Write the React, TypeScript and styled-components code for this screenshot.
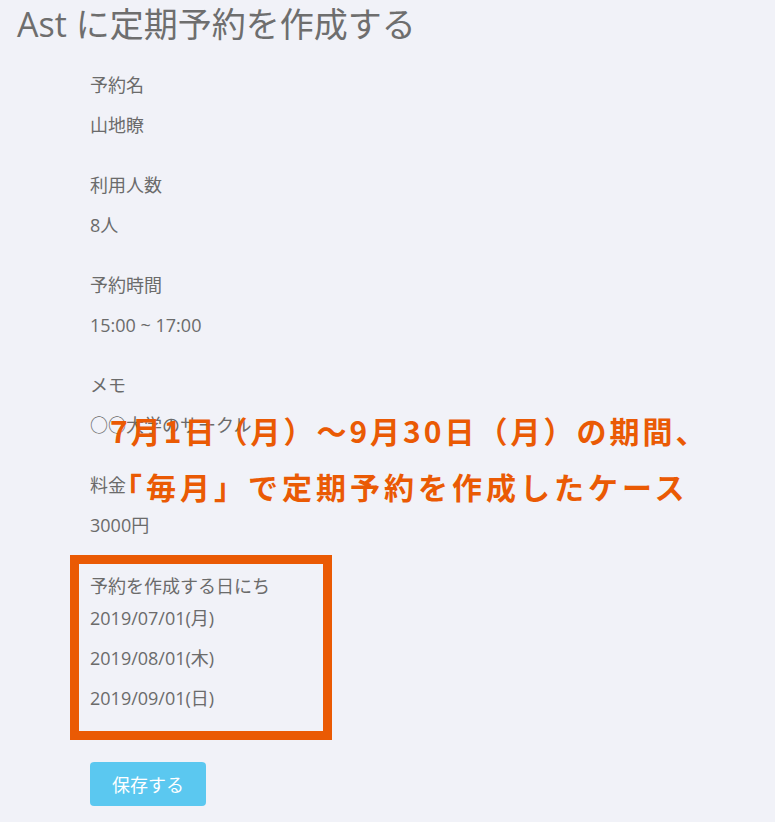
import React from 'react'
import styled, { createGlobalStyle } from 'styled-components'

const GlobalStyle = createGlobalStyle`
  body {
    margin: 0;
    background: #f1f2f8;
    font-family: "Open Sans", "Noto Sans CJK JP", sans-serif;
    color: #6b6b6b;
  }
`

const Page = styled.div`
  position: relative;
  width: 775px;
  height: 822px;
  overflow: hidden;
`

const Title = styled.h1`
  margin: 3px 0 0 17px;
  font-size: 34px;
  font-weight: 400;
  line-height: 42px;
  color: #6e6e6e;
`

const Form = styled.div`
  display: flex;
  flex-direction: column;
  padding: 28px 0 0 90px;
`

const Field = styled.div<{ $gap?: number }>`
  display: flex;
  flex-direction: column;
  gap: 16px;
  margin-bottom: ${(p) => p.$gap ?? 36}px;
`

const Label = styled.div`
  font-size: 18px;
  line-height: 24px;
`

const Value = styled.div`
  font-size: 18px;
  line-height: 24px;
`

const Highlight = styled.div`
  display: flex;
  flex-direction: column;
  gap: 16px;
  width: 233px;
  margin-left: -20px;
  padding: 10px 0 21px 11px;
  border: 9px solid #ea5a04;
`

const Dates = styled.div`
  display: flex;
  flex-direction: column;
  gap: 16px;
  margin-top: -8px;
`

const SaveButton = styled.button`
  align-self: flex-start;
  margin-top: 22px;
  width: 116px;
  height: 44px;
  border: none;
  border-radius: 4px;
  background: #5bc8f0;
  color: #fff;
  font-family: "Open Sans", "Noto Sans CJK JP", sans-serif;
  font-size: 18px;
  cursor: pointer;
`

const Annotation = styled.div`
  position: absolute;
  left: 110px;
  top: 410px;
  display: flex;
  flex-direction: column;
  gap: 15px;
  font-family: "Noto Sans CJK JP", sans-serif;
  font-weight: 700;
  font-size: 30px;
  line-height: 41px;
  color: #ea5a04;
  white-space: nowrap;
`

const AnnotationLine = styled.div<{ $spacing?: number; $indent?: number }>`
  padding-left: ${(p) => p.$indent ?? 0}px;
  letter-spacing: ${(p) => p.$spacing ?? 3}px;
`

const fields = [
  { label: '予約名', value: '山地瞭' },
  { label: '利用人数', value: '8人' },
  { label: '予約時間', value: '15:00 ~ 17:00' },
  { label: 'メモ', value: '○○大学のサークル' },
  { label: '料金', value: '3000円' },
]

const dates = ['2019/07/01(月)', '2019/08/01(木)', '2019/09/01(日)']

export default function App() {
  return (
    <>
      <GlobalStyle />
      <Page>
        <Title>Ast に定期予約を作成する</Title>
        <Form>
          {fields.map((f, i) => (
            <Field key={f.label} $gap={i === fields.length - 1 ? 18 : 36}>
              <Label>{f.label}</Label>
              <Value>{f.value}</Value>
            </Field>
          ))}
          <Highlight>
            <Label>予約を作成する日にち</Label>
            <Dates>
              {dates.map((d) => (
                <Value key={d}>{d}</Value>
              ))}
            </Dates>
          </Highlight>
          <SaveButton>保存する</SaveButton>
        </Form>
        <Annotation>
          <AnnotationLine>7月1日（月）～9月30日（月）の期間、</AnnotationLine>
          <AnnotationLine $indent={2} $spacing={4}>「毎月」で定期予約を作成したケース</AnnotationLine>
        </Annotation>
      </Page>
    </>
  )
}
